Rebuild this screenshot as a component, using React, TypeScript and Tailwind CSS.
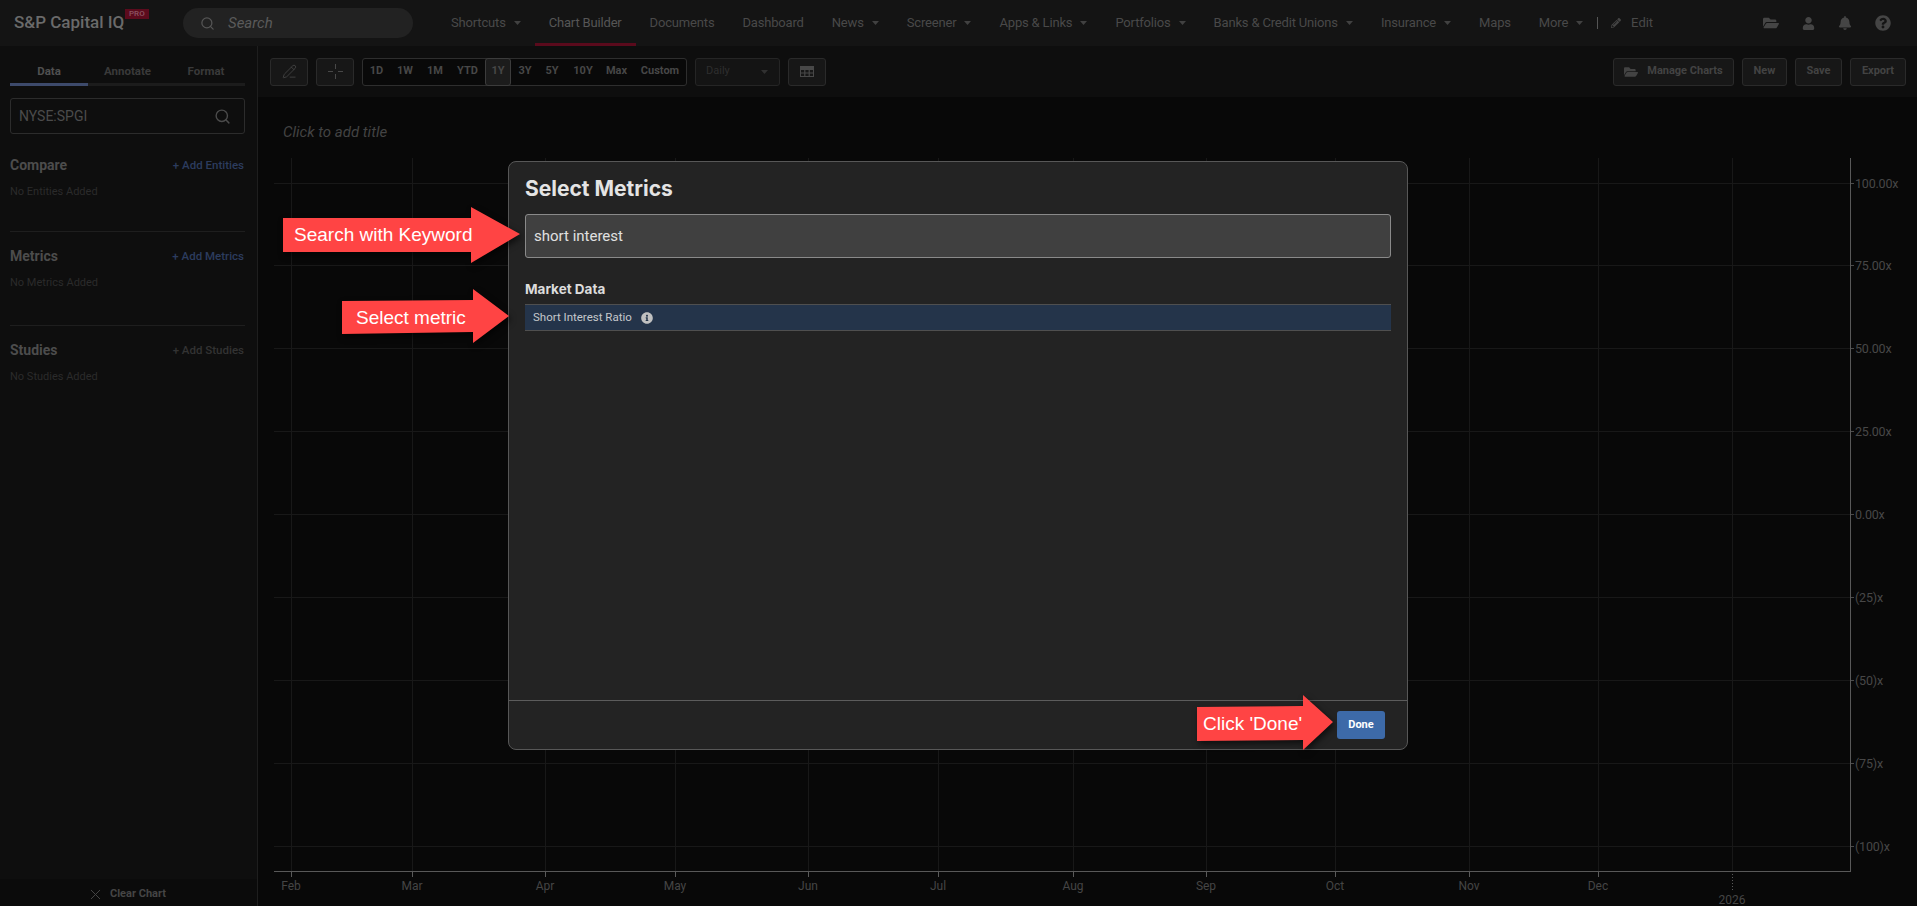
import { Search, PencilLine, X } from "lucide-react"
import { FaFolderOpen, FaUser, FaBell, FaQuestionCircle, FaPencilAlt, FaInfoCircle } from "react-icons/fa"

const navItems = [
  { name: "Shortcuts", caret: true },
  { name: "Chart Builder", active: true },
  { name: "Documents" },
  { name: "Dashboard" },
  { name: "News", caret: true },
  { name: "Screener", caret: true },
  { name: "Apps & Links", caret: true },
  { name: "Portfolios", caret: true },
  { name: "Banks & Credit Unions", caret: true },
  { name: "Insurance", caret: true },
  { name: "Maps" },
  { name: "More", caret: true },
]

const ranges = [
  { label: "1D", w: "w-[27px]" },
  { label: "1W", w: "w-[30px]" },
  { label: "1M", w: "w-[30px]" },
  { label: "YTD", w: "w-[35px]" },
  { label: "1Y", w: "w-[26px]" },
  { label: "3Y", w: "w-[28px]" },
  { label: "5Y", w: "w-[26px]" },
  { label: "10Y", w: "w-[36px]" },
  { label: "Max", w: "w-[31px]" },
  { label: "Custom", w: "w-[54px] pl-[2px]" },
]

const yLabels = [
  { y: 183, label: "100.00x" },
  { y: 265, label: "75.00x" },
  { y: 348, label: "50.00x" },
  { y: 431, label: "25.00x" },
  { y: 514, label: "0.00x" },
  { y: 597, label: "(25)x" },
  { y: 680, label: "(50)x" },
  { y: 763, label: "(75)x" },
  { y: 846, label: "(100)x" },
]

const xLabels = [
  { x: 291, label: "Feb" },
  { x: 412, label: "Mar" },
  { x: 545, label: "Apr" },
  { x: 675, label: "May" },
  { x: 808, label: "Jun" },
  { x: 938, label: "Jul" },
  { x: 1073, label: "Aug" },
  { x: 1206, label: "Sep" },
  { x: 1335, label: "Oct" },
  { x: 1469, label: "Nov" },
  { x: 1598, label: "Dec" },
]

function Caret({ className = "" }: { className?: string }) {
  return (
    <svg width="7" height="4" viewBox="0 0 7 4" className={className}>
      <polygon points="0,0 7,0 3.5,4" fill="currentColor" />
    </svg>
  )
}

function TopNav() {
  return (
    <header className="flex h-[46px] items-center bg-[#141414] text-[#494949]">
      <div className="relative ml-[14px] w-[108px] text-[17px] font-medium whitespace-nowrap text-[#6a6a6a]">
        S&amp;P Capital IQ
        <span className="absolute top-[-1px] left-[111px] bg-[#5c0b1d] px-[4px] text-[8px] leading-[10px] text-[#8c5563]">PRO</span>
      </div>
      <div className="ml-[61px] flex h-[30px] w-[230px] items-center rounded-full bg-[#222222] pl-[17px]">
        <Search size={15} className="text-[#555555]" />
        <span className="ml-[13px] text-[15px] text-[#5a5a5a] italic">Search</span>
      </div>
      <nav className="ml-[38px] flex h-full items-center gap-[28px] text-[13px] tracking-[-0.17px] whitespace-nowrap">
        {navItems.map((item) => (
          <div key={item.name} className={`relative flex h-full items-center ${item.active ? "text-[#565656]" : ""}`}>
            {item.name}
            {item.caret && <Caret className="ml-[8px] text-[#414141]" />}
            {item.active && <div className="absolute right-[-14px] bottom-0 left-[-14px] h-[3px] bg-[#5a0a1c]" />}
          </div>
        ))}
      </nav>
      <div className="ml-[14px] h-[12px] w-px bg-[#555555]" />
      <FaPencilAlt size={10} className="ml-[13px] text-[#444444]" />
      <span className="ml-[10px] text-[13px]">Edit</span>
      <div className="ml-auto mr-[26px] flex items-center gap-[23px] text-[#454545]">
        <FaFolderOpen size={16} />
        <FaUser size={13} />
        <FaBell size={14} />
        <FaQuestionCircle size={16} />
      </div>
    </header>
  )
}

function Section({ title, action, empty, dim }: { title: string; action: string; empty: string; dim?: boolean }) {
  return (
    <div className="h-[94px] border-b border-[#1e1e1e] pt-[14px] first:h-[91px] last:border-b-0">
      <div className="flex items-center justify-between pr-px">
        <span className="text-[14px] font-bold text-[#4c4c4c]">{title}</span>
        <span className={`text-[11.5px] font-medium ${dim ? "text-[#333333]" : "text-[#2c3c5e]"}`}>{action}</span>
      </div>
      <div className="mt-[8px] text-[11px] text-[#2b2b2b]">{empty}</div>
    </div>
  )
}

function Sidebar() {
  return (
    <aside className="flex w-[258px] shrink-0 flex-col border-r border-[#1e1e1e] bg-[#0e0e0e]">
      <div className="pr-[12px] pl-[10px]">
        <div className="flex h-[37px] items-center pt-[14px] text-center text-[11.5px] font-bold text-[#3a3a3a]">
          <span className="w-[78px] text-[#505050]">Data</span>
          <span className="w-[79px]">Annotate</span>
          <span className="w-[78px]">Format</span>
        </div>
        <div className="h-[3px] bg-[#1c1c1c]">
          <div className="h-full w-[78px] bg-[#3d4a6b]" />
        </div>
        <div className="mt-[12px] flex h-[36px] items-center justify-between rounded-[3px] border border-[#2c2c2c] pr-[13px] pl-[8px] text-[14px] text-[#4b4b4b]">
          NYSE:SPGI
          <Search size={17} className="text-[#4b4b4b]" />
        </div>
      </div>
      <div className="mt-[7px] mr-[12px] ml-[10px]">
        <Section title="Compare" action="+ Add Entities" empty="No Entities Added" />
        <Section title="Metrics" action="+ Add Metrics" empty="No Metrics Added" />
        <Section title="Studies" action="+ Add Studies" empty="No Studies Added" dim />
      </div>
      <div className="mt-auto flex h-[27px] items-center justify-center gap-[6px] bg-[#0b0b0b] pt-[4px] pr-[4px] text-[11px] font-bold text-[#454545]">
        <X size={17} strokeWidth={1.4} />
        Clear Chart
      </div>
    </aside>
  )
}

function Toolbar() {
  const btn = "flex h-[28px] items-center justify-center rounded-[3px] border border-[#2a2a2a] bg-[#171717]"
  return (
    <div className="flex h-[51px] items-center bg-[#0e0e0e] pr-[11px] pl-[12px] text-[11px] font-bold text-[#434343]">
      <div className={`${btn} w-[38px]`}>
        <PencilLine size={15} strokeWidth={1.3} className="text-[#484848]" />
      </div>
      <div className={`${btn} ml-[8px] w-[38px]`}>
        <svg width="15" height="15" viewBox="0 0 15 15" stroke="#484848" strokeWidth="1">
          <path d="M7.5 0v5M7.5 10v5M0 7.5h5M10 7.5h5" />
        </svg>
      </div>
      <div className="ml-[8px] flex h-[28px] w-[325px] items-center rounded-[3px] border border-[#2e2e2e] bg-[#090909] text-[#474747]">
        {ranges.map((r) => (
          <span
            key={r.label}
            className={
              r.label === "1Y"
                ? `flex h-[28px] ${r.w} items-center justify-center rounded-[3px] border border-[#3c3c3c] bg-[#1c1c1c]`
                : `flex h-full ${r.w} items-center justify-center`
            }
          >
            {r.label}
          </span>
        ))}
      </div>
      <div className="ml-[8px] flex h-[28px] w-[85px] items-center justify-between rounded-[3px] border border-[#252525] bg-[#141414] pr-[11px] pl-[10px] font-normal text-[#2e2e2e]">
        Daily
        <Caret className="text-[#303030]" />
      </div>
      <div className={`${btn} ml-[8px] w-[38px]`}>
        <svg width="14" height="11" viewBox="0 0 14 11">
          <rect width="14" height="11" fill="#484848" />
          <path d="M1 4h3.2v2.5H1zM5.4 4h3.2v2.5H5.4zM9.8 4H13v2.5H9.8zM1 7.5h3.2V10H1zM5.4 7.5h3.2V10H5.4zM9.8 7.5H13V10H9.8z" fill="#171717" />
        </svg>
      </div>
      <div className="ml-auto flex gap-[8px]">
        <div className={`${btn} w-[121px] gap-[9px]`}>
          <FaFolderOpen size={14} />
          Manage Charts
        </div>
        <div className={`${btn} w-[45px]`}>New</div>
        <div className={`${btn} w-[47px]`}>Save</div>
        <div className={`${btn} w-[56px]`}>Export</div>
      </div>
    </div>
  )
}

function Chart() {
  return (
    <svg width="1917" height="906" viewBox="0 0 1917 906" className="absolute top-0 left-0" fontFamily="Roboto, sans-serif">
      {yLabels.map((t) => (
        <g key={t.label}>
          <line x1="274" x2="1850" y1={t.y + 0.5} y2={t.y + 0.5} stroke="#181818" />
          <line x1="1850" x2="1854" y1={t.y + 0.5} y2={t.y + 0.5} stroke="#4a4a4a" />
          <text x="1855" y={t.y + 5} fontSize="12.5" letterSpacing="-0.2" fill="#474747">{t.label}</text>
        </g>
      ))}
      {xLabels.map((t) => (
        <g key={t.label}>
          <line x1={t.x + 0.5} x2={t.x + 0.5} y1="158" y2="871" stroke="#181818" />
          <line x1={t.x + 0.5} x2={t.x + 0.5} y1="871" y2="877" stroke="#5a5a5a" />
          <text x={t.x} y="890" fontSize="12" fill="#454545" textAnchor="middle">{t.label}</text>
        </g>
      ))}
      <line x1="1732.5" x2="1732.5" y1="158" y2="871" stroke="#181818" />
      <line x1="1732.5" x2="1732.5" y1="871" y2="890" stroke="#5a5a5a" strokeDasharray="1 2" />
      <text x="1732" y="904" fontSize="12" fill="#454545" textAnchor="middle">2026</text>
      <line x1="274" x2="1850" y1="871.5" y2="871.5" stroke="#585858" />
      <line x1="1850.5" x2="1850.5" y1="158" y2="872" stroke="#585858" />
    </svg>
  )
}

function Modal() {
  return (
    <div className="absolute top-[161px] left-[508px] flex h-[589px] w-[900px] flex-col rounded-[8px] border border-[#575757] bg-[#232323]">
      <div className="px-[16px] pt-[13px]">
        <h2 className="h-[29px] font-['Inter',sans-serif] text-[21px] leading-[28px] font-bold text-[#e4e4e4]">Select Metrics</h2>
        <div className="mt-[10px] flex h-[44px] items-center rounded-[3px] border border-[#8a8a8a] bg-[#404040] pl-[8px] text-[15px] text-[#e0e0e0]">
          short interest
        </div>
        <div className="mt-[22px] font-['Inter',sans-serif] text-[13.5px] leading-[18px] font-bold text-[#dcdcdc]">Market Data</div>
        <div className="mt-[6px] flex h-[27px] items-center border-y border-[#4f4f4f] bg-[#24344a] pl-[8px] text-[11.5px] text-[#c4c8cc]">
          Short Interest Ratio
          <FaInfoCircle size={12} className="ml-[9px] text-[#c0c0c0]" />
        </div>
      </div>
      <div className="mt-auto flex h-[49px] items-center justify-end border-t border-[#5c5c5c] pr-[22px]">
        <button className="h-[28px] w-[48px] rounded-[3px] bg-[#3d6aa8] text-[11px] font-bold text-white">Done</button>
      </div>
    </div>
  )
}

function Arrow({ points, box, label, labelClass }: { points: string; box: string; label: string; labelClass: string }) {
  return (
    <div className={`absolute ${box} font-['Liberation_Sans',sans-serif] text-white`}>
      <svg width="100%" height="100%" className="absolute inset-0 overflow-visible drop-shadow-[2px_3px_3px_rgba(0,0,0,0.6)]">
        <polygon points={points} fill="#ff4444" />
      </svg>
      <span className={`absolute whitespace-nowrap ${labelClass}`}>{label}</span>
    </div>
  )
}

export default function App() {
  return (
    <div className="relative h-[906px] w-[1917px] overflow-hidden bg-[#080808] font-['Roboto',sans-serif]">
      <TopNav />
      <div className="flex h-[860px]">
        <Sidebar />
        <main className="flex-1">
          <Toolbar />
          <div className="pt-[24px] pl-[25px] text-[15px] text-[#434343] italic">Click to add title</div>
        </main>
      </div>
      <Chart />
      <Modal />
      <Arrow
        box="top-[207px] left-[283px] h-[56px] w-[237px]"
        points="0,11 188,11 188,0 237,27 188,56 188,45 0,45"
        label="Search with Keyword"
        labelClass="left-[11px] top-[17px] text-[19px] leading-[22px]"
      />
      <Arrow
        box="top-[289px] left-[342px] h-[54px] w-[167px]"
        points="0,12 131,11 131,0 167,27 131,54 131,43 0,45"
        label="Select metric"
        labelClass="left-[14px] top-[18px] text-[19px] leading-[22px]"
      />
      <Arrow
        box="top-[695px] left-[1197px] h-[55px] w-[136px]"
        points="0,12 106,11 106,0 136,27 106,55 106,45 0,46"
        label="Click 'Done'"
        labelClass="left-[6px] top-[18px] text-[19px] leading-[22px]"
      />
    </div>
  )
}
